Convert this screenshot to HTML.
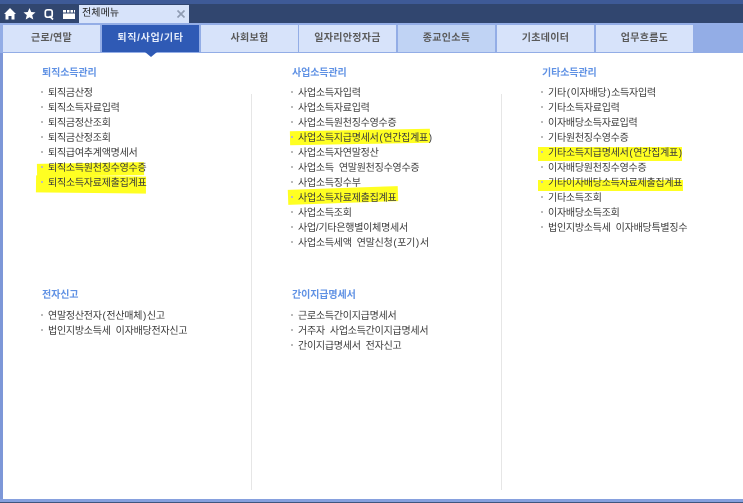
<!DOCTYPE html>
<html lang="ko"><head><meta charset="utf-8">
<style>
html,body{margin:0;padding:0}
body{width:743px;height:503px;overflow:hidden;position:relative;background:#fff;font-family:"Liberation Sans","Noto Sans CJK KR",sans-serif}
div,svg{position:absolute}
.t{white-space:nowrap;font-size:10px;line-height:18px;color:#3a3a3a;letter-spacing:-.25px;word-spacing:2.5px;height:14px;filter:blur(.25px)}
.t i{font-style:normal;padding:0 .8px}
.h{white-space:nowrap;font-size:10px;line-height:18px;color:#5f91e4;font-weight:bold;letter-spacing:-.1px;height:14px;filter:blur(.25px)}
.b{width:2px;height:2px;background:#bbb}
.y{background:#ffff22}
.tab{top:25px;height:27px;line-height:27px;text-align:center;background:#d7e3fa;color:#5a5a5a;font-size:10px;font-weight:bold;letter-spacing:.3px;white-space:nowrap;filter:blur(.2px)}
</style></head><body>
<div style="left:0;top:0;width:743px;height:4px;background:#3e5a97"></div>
<div style="left:0;top:4px;width:743px;height:19px;background:#31466f"></div>
<div style="left:0;top:23px;width:743px;height:30px;background:#93ade6"></div>

<svg style="left:3px;top:7px" width="74" height="14" viewBox="0 0 74 14">
<path fill="#fff" d="M7 1 L13 7 H11.5 V12.5 H8.5 V9 H5.5 V12.5 H2.5 V7 H1Z"/>
<path fill="#fff" d="M26.5 1 L28.2 5 L32.5 5.4 L29.2 8.1 L30.3 12.5 L26.5 10.2 L22.7 12.5 L23.8 8.1 L20.5 5.4 L24.8 5Z"/>
<path fill="none" stroke="#fff" stroke-width="1.7" d="M44.5 2.8 h2.5 q2.2 0 2.2 2.2 v3 q0 2.2 -2.2 2.2 h-2.5 q-2.2 0 -2.2 -2.2 v-3 q0 -2.2 2.2 -2.2Z M46.5 9 L50 12.5"/>
<path fill="#fff" d="M60 3 H72 V12 H60Z"/>
<path fill="#31466f" d="M60 5.5 H72 V6.5 H60Z M63 3 h1 v2.5 h-1Z M66.5 3 h1 v2.5 h-1Z M70 3 h1 v2.5 h-1Z"/>
</svg>

<div style="left:79px;top:5px;width:110px;height:18px;background:#d7e3fa"></div>
<div class="t" style="left:82px;top:5px;color:#222;letter-spacing:.1px">전체메뉴</div>
<svg style="left:176px;top:9px" width="10" height="10" viewBox="0 0 10 10"><path d="M1.5 1.5 L8.5 8.5 M8.5 1.5 L1.5 8.5" stroke="#8f9cb3" stroke-width="1.6"/></svg>

<div class="tab" style="left:3px;width:97px">근로/연말</div>
<div class="tab" style="left:102px;width:97px;background:#2f5ab5;color:#e6edfb;letter-spacing:.7px">퇴직/사업/기타</div>
<div class="tab" style="left:201px;width:97px">사회보험</div>
<div class="tab" style="left:299px;width:97px">일자리안정자금</div>
<div class="tab" style="left:398px;width:97px;background:#c0d3f4">종교인소득</div>
<div class="tab" style="left:497px;width:97px">기초데이터</div>
<div class="tab" style="left:596px;width:97px">업무흐름도</div>

<div style="left:0;top:53px;width:3px;height:446px;background:#7d97d8"></div>
<svg style="left:145px;top:52px" width="12" height="6"><path d="M0 0H12L6 5Z" fill="#2f5ab5"/></svg>
<div style="left:251px;top:94px;width:1px;height:396px;background:#e6e6e6"></div>
<div style="left:501px;top:94px;width:1px;height:396px;background:#e6e6e6"></div>
<div style="left:0;top:499px;width:743px;height:3px;background:#86a0de"></div>
<div style="left:0;top:502px;width:743px;height:1px;background:#3f567f"></div>

<!-- highlights -->
<div class="y" style="left:37px;top:163px;width:107px;height:13px;transform:rotate(-1deg)"></div>
<div class="y" style="left:36px;top:176px;width:110px;height:17px;transform:rotate(.6deg)"></div>
<div class="y" style="left:290px;top:130px;width:140px;height:14px;transform:rotate(-1deg)"></div>
<div class="y" style="left:288px;top:188px;width:110px;height:15px;transform:rotate(-2deg)"></div>
<div class="y" style="left:538px;top:147px;width:144px;height:14px"></div>
<div class="y" style="left:538px;top:180px;width:145px;height:11px"></div>

<!-- column 1 -->
<div class="h" style="left:42px;top:65px">퇴직소득관리</div>
<div class="b" style="left:41px;top:91px"></div><div class="t" style="left:48px;top:85px">퇴직금산정</div>
<div class="b" style="left:41px;top:106px"></div><div class="t" style="left:48px;top:100px">퇴직소득자료입력</div>
<div class="b" style="left:41px;top:121px"></div><div class="t" style="left:48px;top:115px">퇴직금정산조회</div>
<div class="b" style="left:41px;top:136px"></div><div class="t" style="left:48px;top:130px">퇴직금산정조회</div>
<div class="b" style="left:41px;top:151px"></div><div class="t" style="left:48px;top:145px">퇴직급여추계액명세서</div>
<div class="b" style="left:41px;top:166px"></div><div class="t" style="left:48px;top:160px">퇴직소득원천징수영수증</div>
<div class="b" style="left:41px;top:181px"></div><div class="t" style="left:48px;top:175px">퇴직소득자료제출집계표</div>

<div class="h" style="left:42px;top:287px">전자신고</div>
<div class="b" style="left:41px;top:314px"></div><div class="t" style="left:48px;top:308px">연말정산전자<i>(</i>전산매체<i>)</i>신고</div>
<div class="b" style="left:41px;top:329px"></div><div class="t" style="left:48px;top:323px">법인지방소득세 이자배당전자신고</div>

<!-- column 2 -->
<div class="h" style="left:292px;top:65px">사업소득관리</div>
<div class="b" style="left:291px;top:91px"></div><div class="t" style="left:298px;top:85px">사업소득자입력</div>
<div class="b" style="left:291px;top:106px"></div><div class="t" style="left:298px;top:100px">사업소득자료입력</div>
<div class="b" style="left:291px;top:121px"></div><div class="t" style="left:298px;top:115px">사업소득원천징수영수증</div>
<div class="b" style="left:291px;top:136px"></div><div class="t" style="left:298px;top:130px">사업소득지급명세서<i>(</i>연간집계표<i>)</i></div>
<div class="b" style="left:291px;top:151px"></div><div class="t" style="left:298px;top:145px">사업소득자연말정산</div>
<div class="b" style="left:291px;top:166px"></div><div class="t" style="left:298px;top:160px">사업소득 연말원천징수영수증</div>
<div class="b" style="left:291px;top:181px"></div><div class="t" style="left:298px;top:175px">사업소득징수부</div>
<div class="b" style="left:291px;top:196px"></div><div class="t" style="left:298px;top:190px">사업소득자료제출집계표</div>
<div class="b" style="left:291px;top:211px"></div><div class="t" style="left:298px;top:205px">사업소득조회</div>
<div class="b" style="left:291px;top:226px"></div><div class="t" style="left:298px;top:220px">사업/기타은행별이체명세서</div>
<div class="b" style="left:291px;top:241px"></div><div class="t" style="left:298px;top:235px">사업소득세액 연말신청<i>(</i>포기<i>)</i>서</div>

<div class="h" style="left:292px;top:287px">간이지급명세서</div>
<div class="b" style="left:291px;top:314px"></div><div class="t" style="left:298px;top:308px">근로소득간이지급명세서</div>
<div class="b" style="left:291px;top:329px"></div><div class="t" style="left:298px;top:323px">거주자 사업소득간이지급명세서</div>
<div class="b" style="left:291px;top:344px"></div><div class="t" style="left:298px;top:338px">간이지급명세서 전자신고</div>

<!-- column 3 -->
<div class="h" style="left:542px;top:65px">기타소득관리</div>
<div class="b" style="left:541px;top:91px"></div><div class="t" style="left:548px;top:85px">기타<i>(</i>이자배당<i>)</i>소득자입력</div>
<div class="b" style="left:541px;top:106px"></div><div class="t" style="left:548px;top:100px">기타소득자료입력</div>
<div class="b" style="left:541px;top:121px"></div><div class="t" style="left:548px;top:115px">이자배당소득자료입력</div>
<div class="b" style="left:541px;top:136px"></div><div class="t" style="left:548px;top:130px">기타원천징수영수증</div>
<div class="b" style="left:541px;top:151px"></div><div class="t" style="left:548px;top:145px">기타소득지급명세서<i>(</i>연간집계표<i>)</i></div>
<div class="b" style="left:541px;top:166px"></div><div class="t" style="left:548px;top:160px">이자배당원천징수영수증</div>
<div class="b" style="left:541px;top:181px"></div><div class="t" style="left:548px;top:175px">기타이자배당소득자료제출집계표</div>
<div class="b" style="left:541px;top:196px"></div><div class="t" style="left:548px;top:190px">기타소득조회</div>
<div class="b" style="left:541px;top:211px"></div><div class="t" style="left:548px;top:205px">이자배당소득조회</div>
<div class="b" style="left:541px;top:226px"></div><div class="t" style="left:548px;top:220px">법인지방소득세 이자배당특별징수</div>
</body></html>
